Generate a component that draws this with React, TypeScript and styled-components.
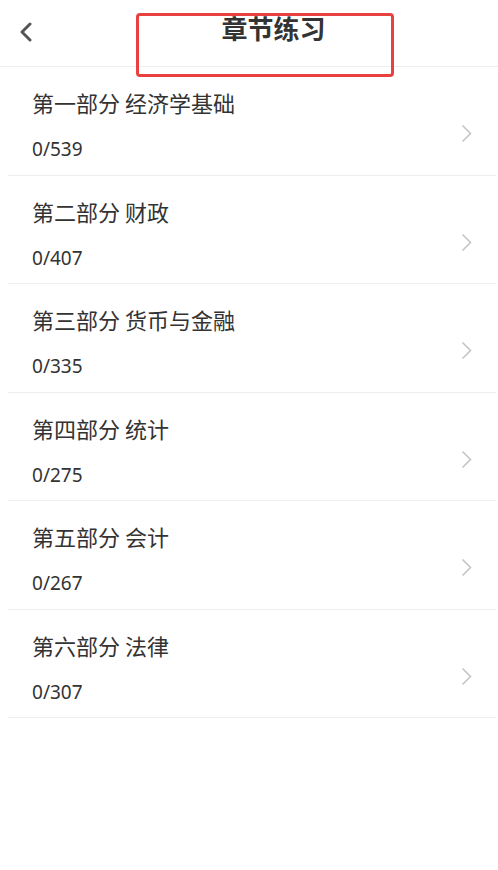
import * as React from "react";
import styled, { createGlobalStyle } from "styled-components";

const CHAPTERS = [
  { title: "第一部分 经济学基础", done: 0, total: 539 },
  { title: "第二部分 财政", done: 0, total: 407 },
  { title: "第三部分 货币与金融", done: 0, total: 335 },
  { title: "第四部分 统计", done: 0, total: 275 },
  { title: "第五部分 会计", done: 0, total: 267 },
  { title: "第六部分 法律", done: 0, total: 307 },
];

export default function App() {
  return (
    <>
      <GlobalStyle />
      <Page>
        <Header>
          <BackButton aria-label="返回">
            <svg width="14" height="20" viewBox="0 0 14 20">
              <polyline
                points="11,2 3,10 11,18"
                fill="none"
                stroke="#555"
                strokeWidth="3"
                strokeLinecap="round"
                strokeLinejoin="round"
              />
            </svg>
          </BackButton>
          <Title>章节练习</Title>
          <Highlight />
        </Header>
        <List>
          {CHAPTERS.map((c) => (
            <Row key={c.title}>
              <RowText>
                <RowTitle>{c.title}</RowTitle>
                <RowCount>
                  {c.done}/{c.total}
                </RowCount>
              </RowText>
              <Chevron width="11" height="19" viewBox="0 0 11 19">
                <polyline
                  points="1.5,1.5 9.5,9.5 1.5,17.5"
                  fill="none"
                  stroke="#c4c4c4"
                  strokeWidth="1.6"
                />
              </Chevron>
            </Row>
          ))}
        </List>
      </Page>
    </>
  );
}

const GlobalStyle = createGlobalStyle`
  html, body {
    margin: 0;
    padding: 0;
    background: #ffffff;
  }

  body {
    font-family: Roboto, "Noto Sans CJK SC", sans-serif;
    color: #333333;
  }
`;

const Page = styled.div`
  width: 498px;
  min-height: 870px;
  background: #ffffff;
`;

const Header = styled.header`
  position: relative;
  height: 66px;
  display: flex;
  align-items: center;
  border-bottom: 1px solid #eeeeee;
`;

const BackButton = styled.div`
  width: 50px;
  height: 66px;
  display: flex;
  align-items: center;
  justify-content: flex-start;
  padding-left: 19px;
  box-sizing: border-box;
  margin-top: -2px;
`;

const Title = styled.h1`
  flex: 1;
  margin: 0 0 10px;
  text-align: center;
  font-size: 26px;
  line-height: 34px;
  font-weight: 700;
  color: #333333;
  font-family: "Noto Sans CJK SC", sans-serif;
  padding-right: 1px;
`;

const Highlight = styled.div`
  position: absolute;
  left: 136px;
  top: 13px;
  width: 258px;
  height: 64px;
  box-sizing: border-box;
  border: 3px solid #e8413f;
  border-radius: 4px;
  pointer-events: none;
`;

const List = styled.ul`
  list-style: none;
  margin: 0 2px 0 8px;
  padding: 0;
`;

const Row = styled.li`
  height: 108.5px;
  box-sizing: border-box;
  border-bottom: 1px solid #eeeeee;
  display: flex;
  align-items: flex-start;
  padding: 18px 24px 0 24px;
`;

const RowText = styled.div`
  flex: 1;
  display: flex;
  flex-direction: column;
`;

const RowTitle = styled.div`
  font-family: "Noto Sans CJK SC", sans-serif;
  font-size: 22px;
  line-height: 34px;
  color: #333333;
`;

const RowCount = styled.div`
  margin-top: 18px;
  font-size: 19px;
  line-height: 24px;
  color: #333333;
  font-family: "Noto Sans", sans-serif;
`;

const Chevron = styled.svg`
  margin-top: 39px;
`;
